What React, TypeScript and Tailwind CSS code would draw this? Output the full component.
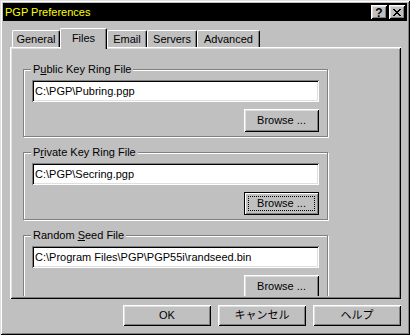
import React from "react";

const raised =
  "shadow-[inset_1px_1px_#ffffff,inset_-1px_-1px_#000000,inset_2px_2px_#dfdfdf,inset_-2px_-2px_#808080]";
const sunken =
  "shadow-[inset_1px_1px_#808080,inset_-1px_-1px_#ffffff,inset_2px_2px_#000000,inset_-2px_-2px_#dfdfdf]";

function Btn({
  children,
  className = "",
  focused = false,
}: {
  children: React.ReactNode;
  className?: string;
  focused?: boolean;
}) {
  if (focused) {
    return (
      <div
        className={
          "flex border border-black bg-[#c0c0c0] p-[3px] shadow-[inset_1px_1px_#ffffff,inset_-1px_-1px_#808080] " +
          className
        }
      >
        <div className="flex flex-1 items-center justify-center border border-dotted border-black">
          {children}
        </div>
      </div>
    );
  }
  return (
    <div
      className={
        "flex items-center justify-center bg-[#c0c0c0] " + raised + " " + className
      }
    >
      {children}
    </div>
  );
}

function Group({
  label,
  path,
  focused = false,
}: {
  label: React.ReactNode;
  path: string;
  focused?: boolean;
}) {
  return (
    <fieldset className="ml-[13px] w-[305px] shrink-0 border border-[#808080] px-[8px] pt-[4px] pb-[4px] shadow-[inset_1px_1px_#ffffff,1px_1px_#ffffff]">
      <legend className="-ml-[1px] bg-[#c0c0c0] px-[2px] leading-[13px]">
        {label}
      </legend>
      <div
        className={
          "flex h-[22px] items-center bg-white pl-[3px] whitespace-nowrap " + sunken
        }
      >
        {path}
      </div>
      <div className="mt-[7px] flex justify-end">
        <Btn className="h-[23px] w-[75px]" focused={focused}>
          Browse ...
        </Btn>
      </div>
    </fieldset>
  );
}

function Tab({
  label,
  w,
  selected = false,
}: {
  label: string;
  w: string;
  selected?: boolean;
}) {
  if (selected) {
    return (
      <div
        className={
          "-mb-[2px] flex h-[21px] items-center justify-center rounded-t-[2px] border-t border-l border-r border-t-white border-l-white border-r-black bg-[#c0c0c0] pb-[2px] shadow-[inset_-1px_0_#808080] " +
          w
        }
      >
        {label}
      </div>
    );
  }
  return (
    <div
      className={
        "flex h-[17px] items-center justify-center rounded-t-[2px] border-t border-l border-r border-t-white border-l-white border-r-black bg-[#c0c0c0] pt-[1px] shadow-[inset_-1px_0_#808080] " +
        w
      }
    >
      {label}
    </div>
  );
}

export default function App() {
  return (
    <div
      className={
        "flex h-[335px] w-[410px] flex-col overflow-hidden bg-[#c0c0c0] p-[3px] text-[11px] text-black font-['Liberation_Sans','Noto_Sans_CJK_JP',sans-serif] shadow-[inset_1px_1px_#dfdfdf,inset_-1px_-1px_#000000,inset_2px_2px_#ffffff,inset_-2px_-2px_#808080]"
      }
    >
      {/* Title bar */}
      <div className="flex h-[18px] shrink-0 items-center bg-black pl-[2px] pr-[2px]">
        <span className="flex-1 text-[11px] text-[#ffff00]">PGP Preferences</span>
        <div
          className={
            "flex h-[14px] w-[16px] items-center justify-center bg-[#c0c0c0] pt-[1px] text-[12px] font-bold leading-none text-black " +
            raised
          }
        >
          ?
        </div>
        <div
          className={
            "ml-[2px] flex h-[14px] w-[16px] items-center justify-center bg-[#c0c0c0] " +
            raised
          }
        >
          <svg width="8" height="7" viewBox="0 0 8 7" shapeRendering="crispEdges">
            <path
              d="M0 0h2v1h-2zM6 0h2v1h-2zM1 1h2v1h-2zM5 1h2v1h-2zM2 2h4v1h-4zM3 3h2v1h-2zM2 4h4v1h-4zM1 5h2v1h-2zM5 5h2v1h-2zM0 6h2v1h-2zM6 6h2v1h-2z"
              fill="#000"
            />
          </svg>
        </div>
      </div>

      {/* Content */}
      <div className="flex flex-1 flex-col pl-[7px] pr-[6px] pt-[7px]">
        <div className="relative z-10 flex h-[19px] shrink-0 items-end pl-[2px]">
          <Tab label="General" w="w-[48px]" />
          <Tab label="Files" w="w-[47px]" selected />
          <Tab label="Email" w="w-[40px]" />
          <Tab label="Servers" w="w-[50px]" />
          <Tab label="Advanced" w="w-[63px]" />
        </div>
        <div className={"flex h-[252px] shrink-0 flex-col overflow-hidden bg-[#c0c0c0] pt-[16px] " + raised}>
          <div className="flex h-[233px] flex-col gap-[9px] overflow-hidden">
            <Group
              label={
                <>
                  P<u>u</u>blic Key Ring File
                </>
              }
              path="C:\PGP\Pubring.pgp"
            />
            <Group
              label={
                <>
                  P<u>r</u>ivate Key Ring File
                </>
              }
              path="C:\PGP\Secring.pgp"
              focused
            />
            <Group
              label={
                <>
                  Random <u>S</u>eed File
                </>
              }
              path="C:\Program Files\PGP\PGP55i\randseed.bin"
            />
          </div>
        </div>
        <div className="mt-[6px] flex justify-end gap-[7px]">
          <Btn className="h-[21px] w-[88px]">OK</Btn>
          <Btn className="h-[21px] w-[88px]">キャンセル</Btn>
          <Btn className="h-[21px] w-[88px]">ヘルプ</Btn>
        </div>
      </div>
    </div>
  );
}
